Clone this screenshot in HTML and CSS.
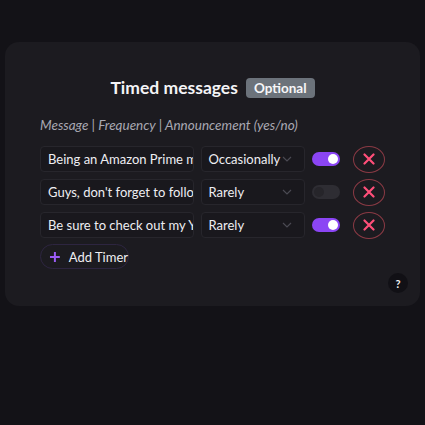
FILE: index.html
```html
<!DOCTYPE html>
<html>
<head>
<meta charset="utf-8">
<link rel="stylesheet" href="styles.css">
</head>
<body>
<div class="card">
  <div class="title-row">
    <h2 class="title">Timed messages</h2>
    <span class="badge">Optional</span>
  </div>
  <p class="hint">Message | Frequency | Announcement (yes/no)</p>
  <div class="rows">
    <div class="row">
      <div class="input">Being an Amazon Prime member</div>
      <div class="select"><span class="opt">Occasionally</span><svg class="chev" viewBox="0 0 10 6" width="10" height="6"><path d="M1 1l4 4 4-4" fill="none" stroke="#4a4952" stroke-width="1.2"/></svg></div>
      <div class="toggle on"><span class="knob"></span></div>
      <button class="del"><svg viewBox="0 0 12 12" width="12" height="12"><path d="M1.5 1.5l9 9M10.5 1.5l-9 9" stroke="#ff4f79" stroke-width="2.2" stroke-linecap="round"/></svg></button>
    </div>
    <div class="row">
      <div class="input">Guys, don't forget to follow</div>
      <div class="select"><span class="opt">Rarely</span><svg class="chev" viewBox="0 0 10 6" width="10" height="6"><path d="M1 1l4 4 4-4" fill="none" stroke="#4a4952" stroke-width="1.2"/></svg></div>
      <div class="toggle"><span class="knob"></span></div>
      <button class="del"><svg viewBox="0 0 12 12" width="12" height="12"><path d="M1.5 1.5l9 9M10.5 1.5l-9 9" stroke="#ff4f79" stroke-width="2.2" stroke-linecap="round"/></svg></button>
    </div>
    <div class="row">
      <div class="input">Be sure to check out my YT</div>
      <div class="select"><span class="opt">Rarely</span><svg class="chev" viewBox="0 0 10 6" width="10" height="6"><path d="M1 1l4 4 4-4" fill="none" stroke="#4a4952" stroke-width="1.2"/></svg></div>
      <div class="toggle on"><span class="knob"></span></div>
      <button class="del"><svg viewBox="0 0 12 12" width="12" height="12"><path d="M1.5 1.5l9 9M10.5 1.5l-9 9" stroke="#ff4f79" stroke-width="2.2" stroke-linecap="round"/></svg></button>
    </div>
  </div>
  <button class="add"><svg viewBox="0 0 12 12" width="12" height="12"><path d="M6 1v10M1 6h10" stroke="#9b5cf6" stroke-width="2"/></svg><span>Add Timer</span></button>
  <div class="footer"><span class="help">?</span></div>
</div>
</body>
</html>
```
FILE: styles.css
```css
* { box-sizing: border-box; }
html, body { margin: 0; padding: 0; }
body {
  background: #131217;
  width: 425px;
  height: 425px;
  font-family: Lato, "Noto Sans", sans-serif;
  color: #e9e8ee;
  padding: 42px 5px 0 5px;
}
.card {
  background: #1c1b20;
  border-radius: 14px;
  height: 264px;
  padding: 34px 35px 0 35px;
  display: flex;
  flex-direction: column;
}
.title-row {
  display: flex;
  justify-content: center;
  align-items: center;
  gap: 8px;
}
.title {
  margin: 0;
  font-size: 17.5px;
  font-weight: 700;
  color: #f4f4f6;
  line-height: 24px;
}
.badge {
  background: #6c737b;
  color: #f6f6f8;
  font-size: 13.5px;
  font-weight: 700;
  border-radius: 4px;
  padding: 0 8px;
  height: 20px;
  line-height: 20px;
}
.hint {
  margin: 16px 0 0 0;
  font-size: 13.5px;
  font-style: italic;
  color: #a9a8b2;
  line-height: 18px;
}
.rows {
  margin-top: 12px;
  display: flex;
  flex-direction: column;
  gap: 7px;
}
.row {
  display: flex;
  align-items: center;
  height: 26px;
}
.input, .select {
  height: 26px;
  background: #19181d;
  border: 1px solid #27262c;
  border-radius: 4px;
  font-size: 13px;
  color: #eeeef2;
  line-height: 24px;
  padding: 0 7px;
  white-space: nowrap;
  overflow: hidden;
}
.input { width: 154px; }
.select {
  width: 105px;
  margin-left: 7px;
  display: flex;
  align-items: center;
  gap: 4px;
  padding-right: 12px;
}
.opt { flex: 1; min-width: 0; }
.chev { flex: none; }
.toggle {
  margin-left: 7px;
  width: 28px;
  height: 14px;
  border-radius: 7px;
  background: #2e2d33;
  position: relative;
}
.toggle .knob {
  position: absolute;
  top: 2px;
  left: 2px;
  width: 10px;
  height: 10px;
  border-radius: 50%;
  background: #26252a;
}
.toggle.on { background: #8b45f4; }
.toggle.on .knob { left: 16px; background: #ffffff; }
.del {
  margin-left: 13px;
  width: 32px;
  height: 27px;
  border-radius: 50%;
  border: 1px solid #8a3a44;
  background: transparent;
  display: flex;
  align-items: center;
  justify-content: center;
  padding: 0;
}
.add {
  margin-top: 6px;
  align-self: flex-start;
  height: 25px;
  width: 89px;
  border-radius: 13px;
  border: 1px solid #2d2540;
  background: transparent;
  color: #eeeef2;
  font-family: inherit;
  font-size: 13px;
  white-space: nowrap;
  display: flex;
  align-items: center;
  gap: 8px;
  padding: 0 0 0 8px;
}
.footer {
  display: flex;
  justify-content: flex-end;
  margin-top: 4px;
  margin-right: -23px;
}
.help {
  width: 20px;
  height: 20px;
  border-radius: 50%;
  background: #111015;
  color: #f2f2f2;
  font-size: 11px;
  font-weight: 700;
  display: flex;
  align-items: center;
  justify-content: center;
}
```
